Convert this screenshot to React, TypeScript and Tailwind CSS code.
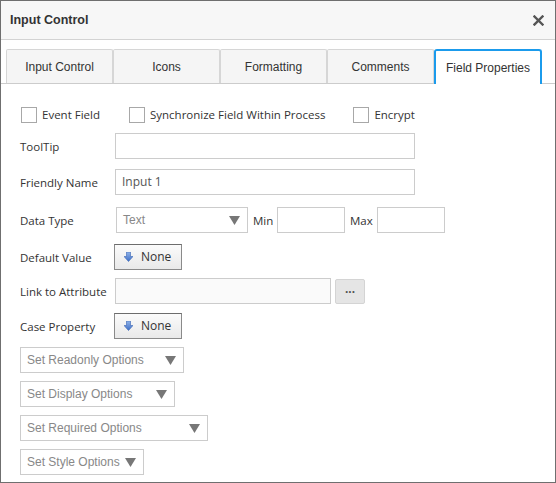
import React from "react";

const label = "font-['Open_Sans',sans-serif] text-[11.5px] text-[#333333]";

function Tri() {
  return (
    <svg width="11" height="9" viewBox="0 0 11 9" className="shrink-0">
      <path d="M0 0 H11 L5.5 9 Z" fill="#777777" />
    </svg>
  );
}

function Select({ text, w, className = "" }: { text: string; w: string; className?: string }) {
  return (
    <div
      className={`${w} h-[26px] border border-[#cccccc] bg-white flex items-center justify-between pl-[6px] pr-[7px] font-['Liberation_Sans',Arial,sans-serif] text-[12px] text-[#888888] ${className}`}
    >
      <span>{text}</span>
      <Tri />
    </div>
  );
}

function DownArrow() {
  return (
    <svg width="9" height="10" viewBox="0 0 9 10" className="shrink-0">
      <defs>
        <linearGradient id="ga" x1="0" y1="0" x2="0" y2="1">
          <stop offset="0" stopColor="#8fb3ea" />
          <stop offset="1" stopColor="#3f6fc6" />
        </linearGradient>
      </defs>
      <path d="M2.5 0 H6.5 V4.5 H9 L4.5 9.5 L0 4.5 H2.5 Z" fill="url(#ga)" stroke="#3a64b4" strokeWidth="0.6" />
    </svg>
  );
}

function NoneButton() {
  return (
    <div className="w-[68px] h-[26px] border border-[#8a8a8a] border-t-[#6d6d6d] bg-gradient-to-b from-[#fbfbfb] to-[#e9e9e9] flex items-center pl-[9px] gap-[8px]">
      <DownArrow />
      <span className={`${label} text-[12px]`}>None</span>
    </div>
  );
}

function Check({ text }: { text: string }) {
  return (
    <div className="flex items-center gap-[5px]">
      <div className="w-[16px] h-[16px] border border-[#a8a8a8] bg-white" />
      <span className={label}>{text}</span>
    </div>
  );
}

function Row({ name, children, mt }: { name: string; children: React.ReactNode; mt: string }) {
  return (
    <div className={`flex items-center ${mt}`}>
      <div className={`w-[95px] pt-[2px] ${label}`}>{name}</div>
      {children}
    </div>
  );
}

const tabs = ["Input Control", "Icons", "Formatting", "Comments", "Field Properties"];

export default function App() {
  return (
    <div className="w-[556px] h-[483px] border border-[#6f6f6f] bg-white flex flex-col overflow-hidden">
      <div className="h-[39px] shrink-0 bg-[#f7f7f7] border-b border-[#d3d3d3] flex items-center justify-between pl-[9px] pr-[11px]">
        <span className="font-['Liberation_Sans',Arial,sans-serif] text-[12.5px] font-bold text-[#333333]">Input Control</span>
        <svg width="11" height="11" viewBox="0 0 11 11">
          <path d="M1.5 1.5 L9.5 9.5 M9.5 1.5 L1.5 9.5" stroke="#555555" strokeWidth="2.4" strokeLinecap="square" />
        </svg>
      </div>

      <div className="mt-[9px] flex pl-[5px] border-b border-[#cccccc] h-[35px] shrink-0">
        {tabs.map((t, i) => {
          const active = i === tabs.length - 1;
          return (
            <div
              key={t}
              className={
                active
                  ? "w-[108px] h-[35px] border-2 border-b-0 border-[#1b9bec] rounded-t-[3px] bg-white flex items-center justify-center font-['Liberation_Sans',Arial,sans-serif] text-[12px] text-[#333333] -mb-px relative"
                  : "w-[107px] h-[34px] border border-b-0 border-[#d6d6d6] rounded-t-[2px] bg-[#f5f5f5] flex items-center justify-center font-['Liberation_Sans',Arial,sans-serif] text-[12px] text-[#333333]"
              }
            >
              {t}
            </div>
          );
        })}
      </div>

      <div className="flex flex-col pl-[19px]">
        <div className="flex items-center mt-[23px] h-[16px]">
          <div className="ml-px"><Check text="Event Field" /></div>
          <div className="ml-[29px]"><Check text="Synchronize Field Within Process" /></div>
          <div className="ml-[28px]"><Check text="Encrypt" /></div>
        </div>

        <Row name="ToolTip" mt="mt-[10px]">
          <div className="w-[300px] h-[26px] border border-[#cccccc] bg-white" />
        </Row>

        <Row name="Friendly Name" mt="mt-[10px]">
          <div className="w-[300px] h-[26px] border border-[#cccccc] bg-white flex items-center pl-[6px] font-['Open_Sans',sans-serif] text-[12px] text-[#555555]">
            Input 1
          </div>
        </Row>

        <Row name="Data Type" mt="mt-[12px]">
          <Select text="Text" w="w-[132px] ml-px" />
          <span className={`${label} ml-[5px] w-[24px] pt-[2px]`}>Min</span>
          <div className="w-[68px] h-[26px] border border-[#cccccc] bg-white" />
          <span className={`${label} ml-[5px] w-[27px] pt-[2px]`}>Max</span>
          <div className="w-[68px] h-[26px] border border-[#cccccc] bg-white" />
        </Row>

        <Row name="Default Value" mt="mt-[11px]">
          <div className="-ml-px"><NoneButton /></div>
        </Row>

        <Row name="Link to Attribute" mt="mt-[8px]">
          <div className="w-[216px] h-[26px] border border-[#cccccc] bg-[#fafafa]" />
          <div className="ml-[4px] w-[30px] h-[25px] border border-[#d4d4d4] rounded-[2px] bg-[#e5e5e5] flex items-center justify-center">
            <span className="font-['Liberation_Sans',Arial,sans-serif] text-[12px] font-bold text-[#555555] leading-none -mt-[4px]">...</span>
          </div>
        </Row>

        <Row name="Case Property" mt="mt-[9px]">
          <div className="-ml-px"><NoneButton /></div>
        </Row>

        <Select text="Set Readonly Options" w="w-[164px]" className="mt-[8px]" />
        <Select text="Set Display Options" w="w-[155px]" className="mt-[8px]" />
        <Select text="Set Required Options" w="w-[188px]" className="mt-[8px]" />
        <Select text="Set Style Options" w="w-[124px]" className="mt-[8px]" />
      </div>
    </div>
  );
}
